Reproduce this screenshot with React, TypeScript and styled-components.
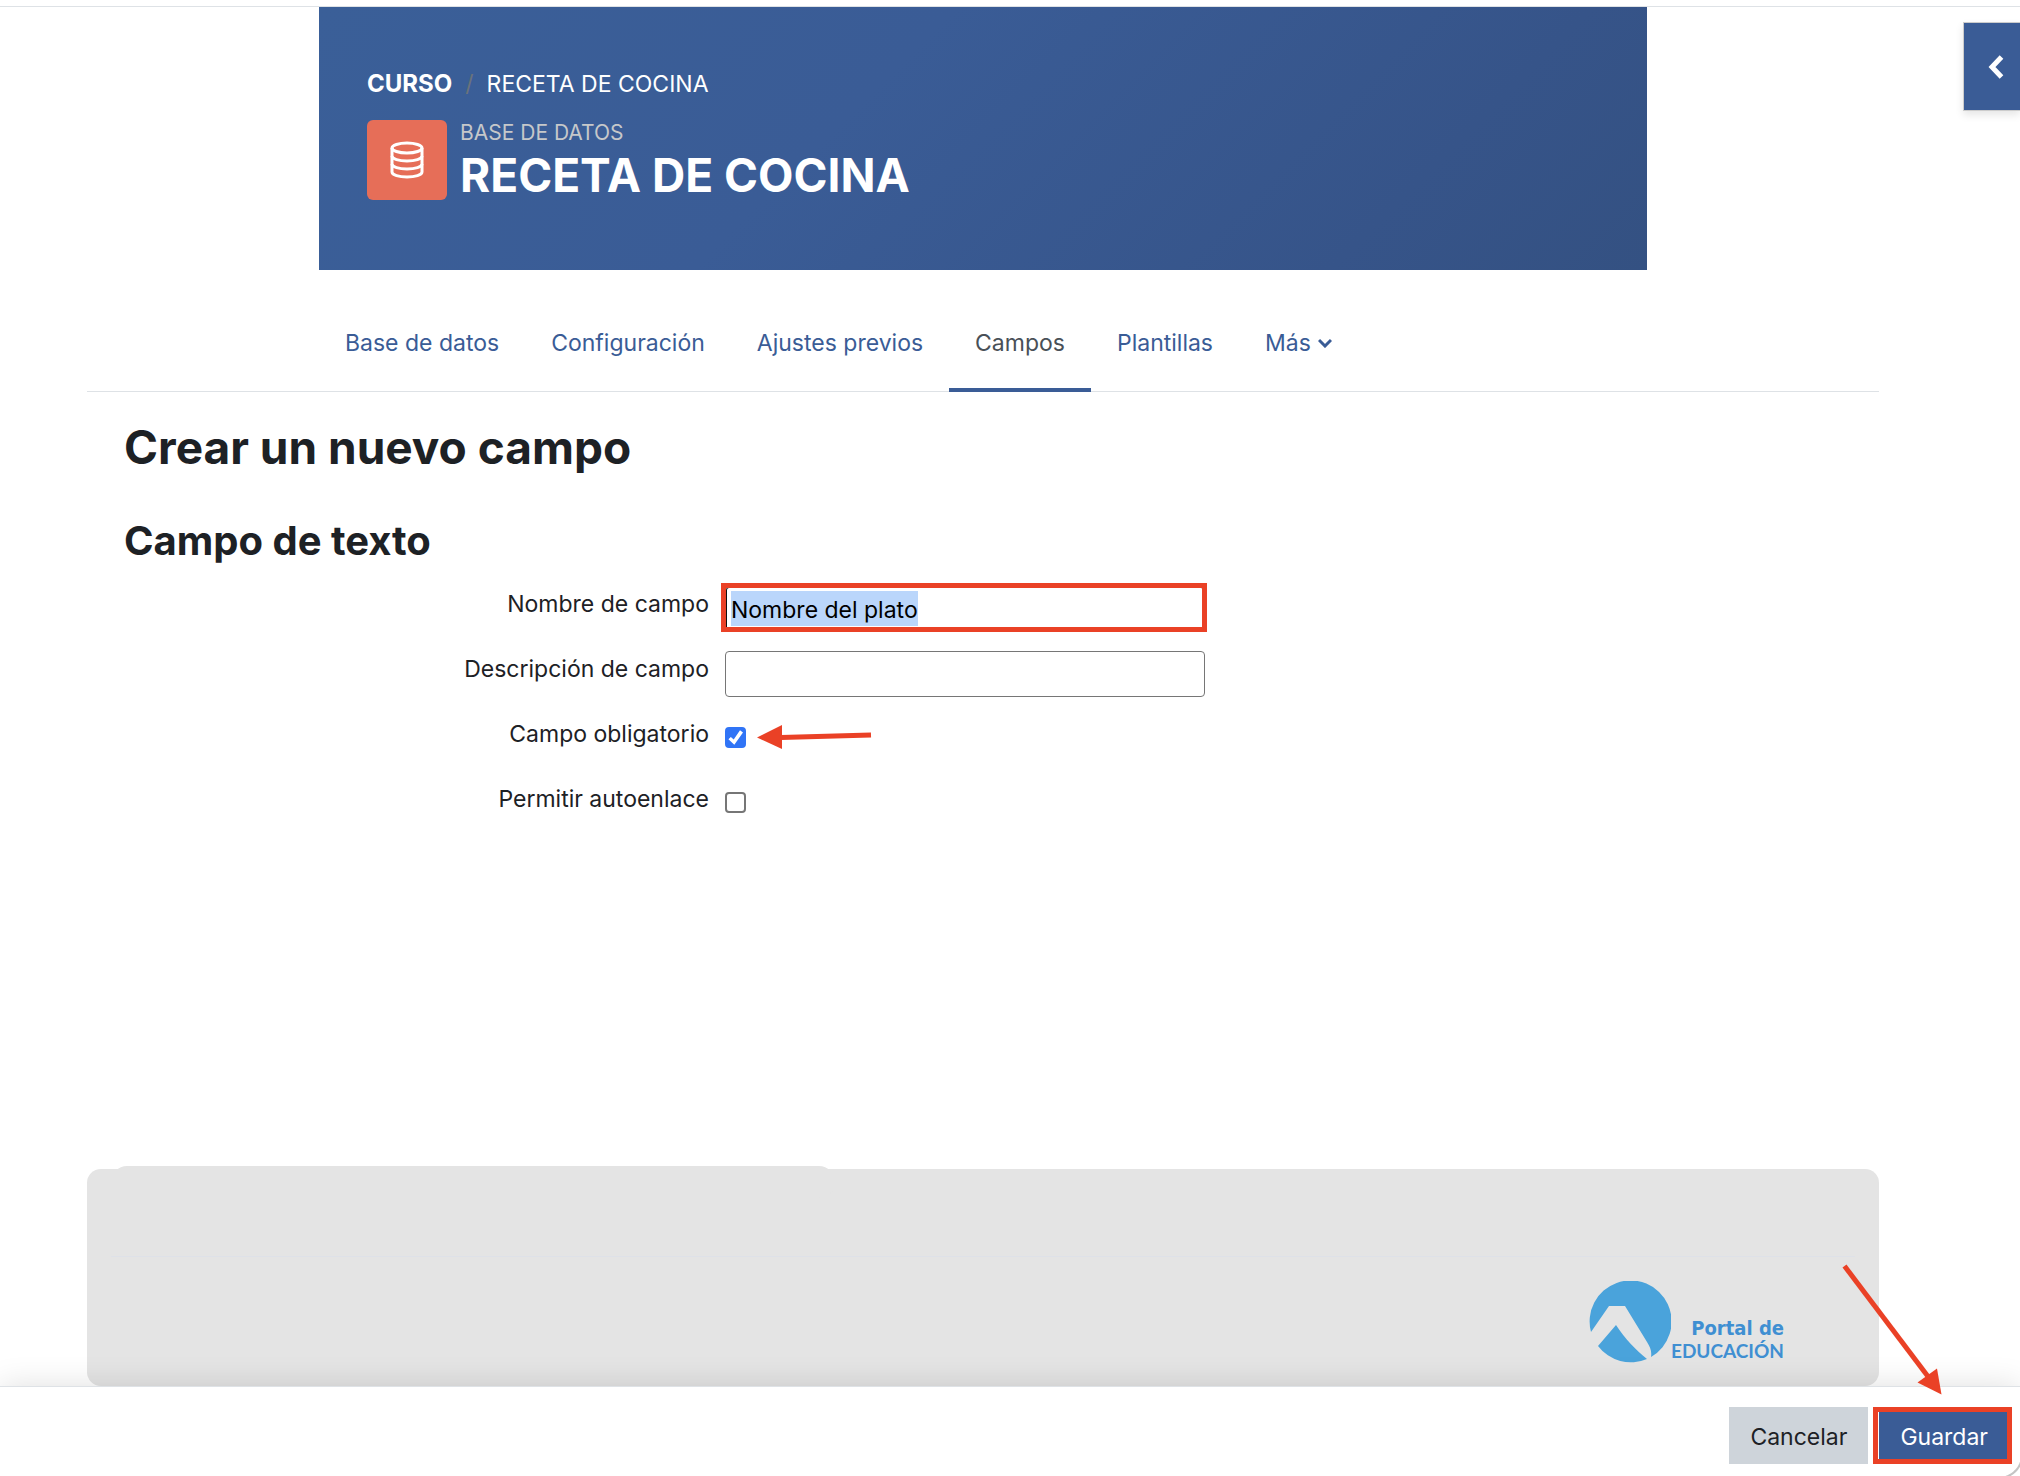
import React, { useEffect, useRef } from 'react';
import styled, { createGlobalStyle } from 'styled-components';

const GlobalStyle = createGlobalStyle`
  *, *::before, *::after { box-sizing: border-box; }
  html, body, #root { height: 100%; }
  body {
    margin: 0;
    overflow: hidden;
    background: #fff;
    color: #1d2125;
    font-family: Inter, "Liberation Sans", sans-serif;
    font-size: 23px;
    line-height: 36px;
  }
`;

const Shell = styled.div`
  height: 100%;
  display: flex;
  flex-direction: column;
`;

const TopBar = styled.div`
  flex: none;
  height: 7px;
  border-bottom: 1px solid #dee2e6;
`;

const Page = styled.main`
  flex: 1;
  min-height: 0;
  display: flex;
  flex-direction: column;
  padding: 0 141px 0 87px;
`;

const Banner = styled.header`
  width: 100%;
  max-width: 1328px;
  height: 263px;
  margin: 0 auto;
  padding: 59px 48px 0;
  background: linear-gradient(135deg, #3a5f98 0%, #3a5c96 40%, #365489 80%, #345182 100%);
  color: #fff;
  text-transform: uppercase;
`;

const Crumbs = styled.nav`
  display: flex;
  align-items: baseline;
  gap: 13px;
`;

const Crumb = styled.a<{ $strong?: boolean }>`
  color: #fff;
  text-decoration: none;
  font-size: ${(p) => (p.$strong ? 24 : 23)}px;
  font-weight: ${(p) => (p.$strong ? 700 : 400)};
`;

const Slash = styled.span`
  color: #6a737b;
`;

const Activity = styled.div`
  display: flex;
  gap: 13px;
  margin-top: 18px;
`;

const ActivityIcon = styled.div`
  width: 80px;
  height: 80px;
  border-radius: 6px;
  background: #e66e58;
  display: grid;
  place-items: center;
`;

const Kind = styled.div`
  font-size: 21px;
  line-height: 26px;
  color: #c6c8ca;
`;

const Title = styled.h1`
  margin: 0;
  font-size: 46px;
  line-height: 58px;
  font-weight: 700;
`;

const Tabs = styled.nav`
  display: flex;
  margin-top: 22px;
  padding: 0 232px;
  border-bottom: 1px solid #dee2e6;
`;

const Tab = styled.a<{ $active?: boolean }>`
  display: flex;
  align-items: center;
  gap: 7px;
  height: 100px;
  padding: 2px 26px 0;
  margin-bottom: -1px;
  border-top: 4px solid transparent;
  border-bottom: 4px solid ${(p) => (p.$active ? '#3a5c96' : 'transparent')};
  color: ${(p) => (p.$active ? '#495057' : '#3a5c96')};
  text-decoration: none;
  white-space: nowrap;
`;

const Content = styled.section`
  padding: 0 37px;
`;

const Heading = styled.h2`
  margin: 26px 0 0;
  font-size: 46px;
  line-height: 58px;
  font-weight: 700;
`;

const SubHeading = styled.h3`
  margin: 41px 0 0;
  font-size: 40px;
  line-height: 48px;
  font-weight: 700;
`;

const Form = styled.form`
  display: flex;
  flex-direction: column;
  margin-top: 16px;
`;

const Field = styled.div`
  display: grid;
  grid-template-columns: 585px 480px;
  column-gap: 16px;
  height: 65px;
`;

const Label = styled.label`
  padding-top: 5px;
  text-align: right;
`;

const Control = styled.div`
  position: relative;
  display: flex;
  align-items: flex-start;
  padding-top: 5px;
`;

const TextInput = styled.input`
  width: 100%;
  height: 46px;
  padding: 2px 5px 0;
  border: 1px solid #767676;
  border-radius: 4px;
  background: #fff;
  color: #000;
  font: inherit;
  line-height: 36px;
  &:focus {
    outline: 1px solid #101010;
    outline-offset: -2px;
    background: linear-gradient(#bad6fb, #bad6fb) 5px 4px / 187px 35px no-repeat #fff;
  }
  &::selection { background: #bad6fb; color: #000; }
`;

const Check = styled.input`
  appearance: none;
  display: grid;
  place-items: center;
  width: 21px;
  height: 21px;
  margin: 11px 0 0;
  border: 2px solid #767676;
  border-radius: 4px;
  background: #fff;
  &:checked { border-color: #3074f6; background: #3074f6; }
  &:checked::before {
    content: '';
    width: 15px;
    height: 15px;
    background: #fff;
    clip-path: polygon(3% 62%, 19% 46%, 38% 63%, 80% 2%, 100% 16%, 42% 98%);
  }
`;

const Frame = styled.span<{ $inset: string }>`
  position: absolute;
  inset: ${(p) => p.$inset};
  border: 5px solid #ea4126;
  pointer-events: none;
`;

const CheckArrow = styled.svg`
  position: absolute;
  left: 32px;
  top: 13px;
`;

const Footer = styled.footer`
  position: relative;
  flex: none;
  height: 217px;
  margin-top: auto;
  padding: 87px 24px 0;
  border-radius: 14px;
  background: #e4e4e4;
  &::before {
    content: '';
    position: absolute;
    left: 24px;
    top: -3px;
    width: 724px;
    height: 32px;
    border-radius: 16px;
    background: #e4e4e4;
  }
`;

const Brand = styled.div`
  display: flex;
  justify-content: flex-end;
  padding: 24px 71px 0 0;
  border-top: 1px solid #dee1e8;
`;

const BrandText = styled.div`
  padding-top: 35px;
  text-align: right;
  font-family: "DejaVu Sans Condensed", "DejaVu Sans", sans-serif;
  font-size: 20px;
  line-height: 24px;
  font-weight: 700;
  color: #3f8fd2;
`;

const BrandStrong = styled.div`
  font-family: Lato, sans-serif;
  font-size: 19px;
  line-height: 22px;
`;

const ActionBar = styled.div`
  position: relative;
  flex: none;
  display: flex;
  justify-content: flex-end;
  gap: 11px;
  height: 90px;
  padding: 20px 11px 0;
  border-top: 1px solid #dee2e6;
  background: #fff;
  box-shadow: 0 0 32px rgba(0, 0, 0, 0.13);
  &::after {
    content: '';
    position: absolute;
    right: -3px;
    bottom: -3px;
    width: 24px;
    height: 24px;
    border: solid #c4c4c4;
    border-width: 0 2px 2px 0;
    border-radius: 0 0 24px 0;
  }
`;

const Action = styled.button<{ $primary?: boolean }>`
  height: 57px;
  padding: 2px 21px 0;
  border: 0;
  background: ${(p) => (p.$primary ? '#3a5c96' : '#ced4da')};
  color: ${(p) => (p.$primary ? '#fff' : '#1d2125')};
  font: inherit;
`;

const ActionWrap = styled.div`
  position: relative;
  display: flex;
  height: 57px;
`;

const SaveArrow = styled.svg`
  position: absolute;
  right: 70px;
  bottom: 76px;
`;

const DrawerToggle = styled.button`
  position: absolute;
  right: 0;
  top: 22px;
  display: grid;
  place-items: center;
  width: 57px;
  height: 89px;
  padding: 0 0 0 8px;
  border: 1px solid #ccc;
  border-right: 0;
  background: #3a5c96;
  box-shadow: 0 4px 8px rgba(0, 0, 0, 0.1);
`;

const tabs = ['Base de datos', 'Configuración', 'Ajustes previos', 'Campos', 'Plantillas'];

export default function App() {
  const nameRef = useRef<HTMLInputElement>(null);

  useEffect(() => {
    nameRef.current?.focus();
    nameRef.current?.select();
  }, []);

  return (
    <Shell>
      <GlobalStyle />
      <TopBar />
      <Page>
        <Banner>
          <Crumbs>
            <Crumb href="#curso" $strong>Curso</Crumb>
            <Slash>/</Slash>
            <Crumb href="#receta">Receta de cocina</Crumb>
          </Crumbs>
          <Activity>
            <ActivityIcon>
              <svg width="34" height="38" viewBox="0 0 34 38" fill="none" stroke="#fff" strokeWidth="3">
                <ellipse cx="17" cy="7" rx="15" ry="5" />
                <path d="M2 7v24c0 3 7 5 15 5s15-2 15-5V7" />
                <path d="M2 15c0 3 7 5 15 5s15-2 15-5M2 23c0 3 7 5 15 5s15-2 15-5" />
              </svg>
            </ActivityIcon>
            <div>
              <Kind>Base de datos</Kind>
              <Title>Receta de cocina</Title>
            </div>
          </Activity>
        </Banner>
        <Tabs>
          {tabs.map((t) => (
            <Tab key={t} href="#" $active={t === 'Campos'}>{t}</Tab>
          ))}
          <Tab href="#">
            Más
            <svg width="14" height="10" viewBox="0 0 14 10" fill="none" stroke="#3a5c96" strokeWidth="3">
              <path d="M1 2l6 6 6-6" />
            </svg>
          </Tab>
        </Tabs>
        <Content>
          <Heading>Crear un nuevo campo</Heading>
          <SubHeading>Campo de texto</SubHeading>
          <Form>
            <Field>
              <Label htmlFor="name">Nombre de campo</Label>
              <Control>
                <TextInput id="name" ref={nameRef} defaultValue="Nombre del plato" />
                <Frame $inset="2px -2px 14px -4px" />
              </Control>
            </Field>
            <Field>
              <Label htmlFor="description">Descripción de campo</Label>
              <Control>
                <TextInput id="description" />
              </Control>
            </Field>
            <Field>
              <Label htmlFor="required">Campo obligatorio</Label>
              <Control>
                <Check id="required" type="checkbox" defaultChecked />
                <CheckArrow width="116" height="26" viewBox="0 0 116 26">
                  <path d="M24 13.500L114 11" stroke="#ea4126" strokeWidth="5" />
                  <path d="M0 13.500L25 1V25Z" fill="#ea4126" />
                </CheckArrow>
              </Control>
            </Field>
            <Field>
              <Label htmlFor="autolink">Permitir autoenlace</Label>
              <Control>
                <Check id="autolink" type="checkbox" />
              </Control>
            </Field>
          </Form>
        </Content>
        <Footer>
          <Brand>
            <svg width="82" height="82" viewBox="0 0 82 82">
              <path fill="#4aa3db" d="M2 51A41 41 0 1 1 62 76C63 70 61 66 58 61L36 25H20ZM9 65L27 44C36 58 46 68 58 78A41 41 0 0 1 9 65Z" />
            </svg>
            <BrandText>
              Portal de
              <BrandStrong>EDUCACIÓN</BrandStrong>
            </BrandText>
          </Brand>
        </Footer>
      </Page>
      <ActionBar>
        <Action type="button">Cancelar</Action>
        <ActionWrap>
          <Action type="submit" $primary>Guardar</Action>
          <Frame $inset="0 -3px 0 -6px" />
        </ActionWrap>
        <SaveArrow width="110" height="140" viewBox="0 0 110 140">
          <path d="M4.500 6L88 116.500" stroke="#ea4126" strokeWidth="5" />
          <path d="M101.500 134.500L77.500 122.500L97 108.500Z" fill="#ea4126" />
        </SaveArrow>
      </ActionBar>
      <DrawerToggle type="button" aria-label="Abrir cajón de bloques">
        <svg width="16" height="24" viewBox="0 0 16 24" fill="none" stroke="#fff" strokeWidth="5">
          <path d="M13.500 2L4 12l9.500 10" />
        </svg>
      </DrawerToggle>
    </Shell>
  );
}
